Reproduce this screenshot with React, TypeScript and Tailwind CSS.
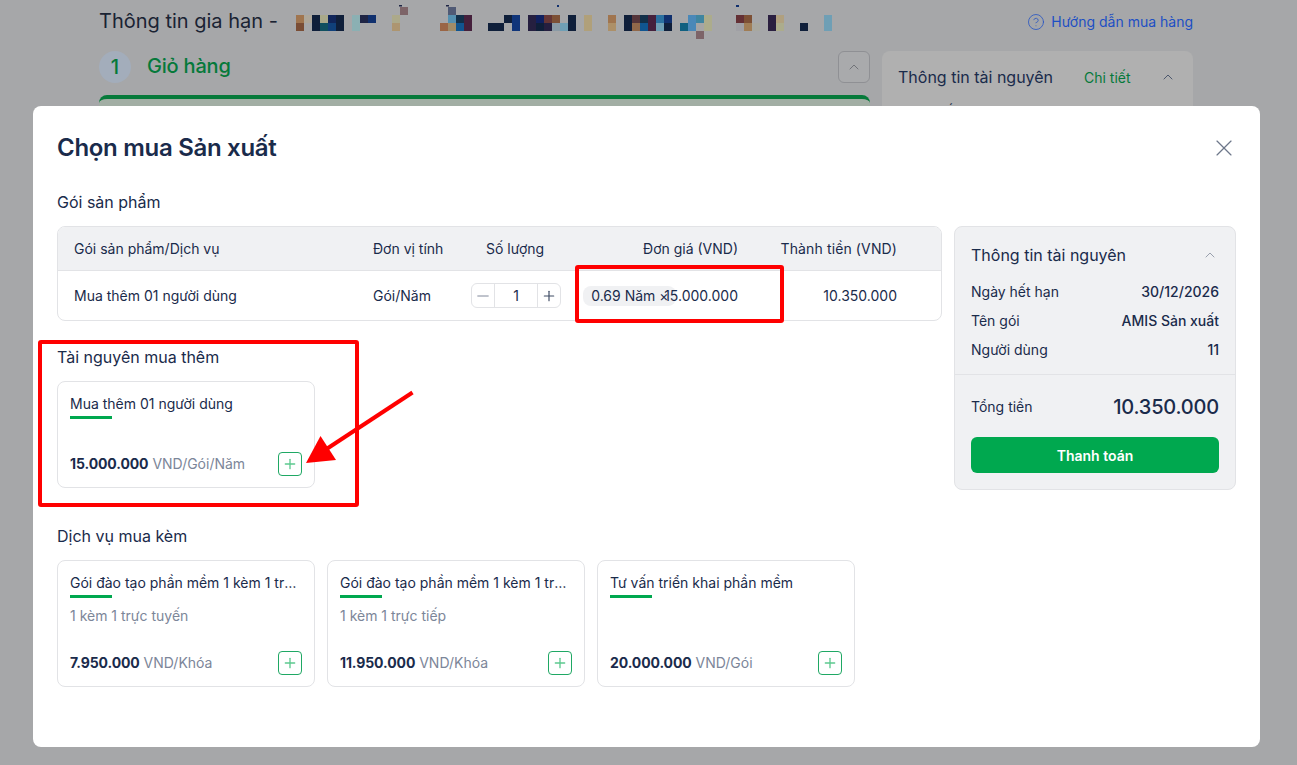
import { ChevronUp, CircleHelp, Minus, Plus, X } from "lucide-react"

// censored strip in the header: [x, y, colour], 8x8 cells
const mosaic: [number, number, string][] = [
    [296, 15, "#a0754f"], [304, 15, "#aea79a"], [312, 15, "#0f1f3a"], [320, 15, "#a9a98a"], [328, 15, "#10255a"], [336, 15, "#0f1f3a"],
    [296, 23, "#7a4d35"], [312, 23, "#0f1f3a"], [320, 23, "#10505f"], [328, 23, "#10407a"], [336, 23, "#0f1f3a"],
    [352, 15, "#8bb0b3"], [360, 15, "#1f2545"], [368, 15, "#10306e"], [352, 23, "#8bb0b3"],
    [400, 7, "#7d6468"], [392, 15, "#aca98a"], [392, 23, "#ad9570"],
    [448, 7, "#505a75"], [448, 15, "#5590b0"], [456, 15, "#12304a"], [464, 15, "#45203c"],
    [440, 23, "#9a6545"], [448, 23, "#a08c68"], [456, 23, "#105590"], [464, 23, "#45203c"],
    [504, 15, "#0f1f3a"], [512, 15, "#10357a"], [488, 23, "#0f1f3a"], [496, 23, "#0f1f3a"], [512, 23, "#10357a"],
    [528, 15, "#251f40"], [536, 15, "#10205f"], [544, 15, "#643535"], [552, 15, "#7d5035"],
    [528, 23, "#251f40"], [536, 23, "#0f1f3a"], [544, 23, "#251f40"], [552, 23, "#8a9aa5"], [560, 23, "#6f9fb5"],
    [568, 15, "#0f1f3a"], [568, 23, "#0f1f3a"], [584, 15, "#b0a07a"], [584, 23, "#b0a07a"],
    [608, 15, "#a0754f"], [608, 23, "#ad9068"],
    [624, 15, "#0f1f3a"], [632, 15, "#55353a"], [640, 15, "#12304a"], [648, 15, "#45203c"], [656, 15, "#2a70a0"], [664, 15, "#10306e"],
    [624, 23, "#0f1f3a"], [632, 23, "#90684a"], [640, 23, "#105590"], [648, 23, "#45203c"], [656, 23, "#6f9fb5"], [664, 23, "#0f1f3a"],
    [688, 15, "#4a88b8"], [696, 15, "#3f85a0"], [704, 15, "#acac8c"],
    [680, 23, "#106080"], [688, 23, "#4a88b8"], [696, 23, "#a5a5a5"], [704, 23, "#acac8c"], [696, 31, "#7d6468"],
    [736, 15, "#643035"], [744, 15, "#7d5035"], [736, 23, "#a0a0a5"], [744, 23, "#a07d55"], [752, 23, "#a8a8a0"],
    [768, 15, "#2a1f40"], [776, 15, "#b0a07f"], [768, 23, "#2a1f40"], [776, 23, "#acac8c"],
    [800, 23, "#0f1f3a"], [824, 15, "#6f9fb5"], [824, 23, "#6f9fb5"],
]

const services = [
    { name: "Gói đào tạo phần mềm 1 kèm 1 trực tuyến", desc: "1 kèm 1 trực tuyến", price: "7.950.000", unit: "VND/Khóa" },
    { name: "Gói đào tạo phần mềm 1 kèm 1 trực tiếp", desc: "1 kèm 1 trực tiếp", price: "11.950.000", unit: "VND/Khóa" },
    { name: "Tư vấn triển khai phần mềm", desc: "", price: "20.000.000", unit: "VND/Gói" },
]

const resources = [
    { label: "Ngày hết hạn", value: "30/12/2026" },
    { label: "Tên gói", value: "AMIS Sản xuất" },
    { label: "Người dùng", value: "11" },
]

function ProductCard({ name, desc, price, unit, height }: { name: string, desc?: string, price: string, unit: string, height: string }) {
    return (
        <div className={`${height} w-[258px] rounded-lg border border-[#e2e3e6] bg-white px-3 pt-3 pb-[11px] flex flex-col`}>
            <p className="truncate text-sm leading-5 text-[#1a2b4b]">{name}</p>
            <div className="mt-[2px] h-[3px] w-[42px] shrink-0 bg-[#00a84f]" />
            {desc ? <p className="mt-2 text-sm leading-5 text-[#7c8699]">{desc}</p> : null}
            <div className="mt-auto flex items-center justify-between">
                <p className="text-sm leading-5 text-[#7c8699]">
                    <span className="font-bold tracking-[-0.1px] text-[#1a2b4b]">{price}</span> {unit}
                </p>
                <button type="button" className="flex size-6 items-center justify-center rounded border border-[#1fa864] bg-white text-[#5cc98f]">
                    <Plus size={16} strokeWidth={2} />
                </button>
            </div>
        </div>
    )
}

export default function App() {
    return (
        <div className="relative h-[765px] overflow-hidden bg-[#a6a7a9] pl-[99px] pr-[104px] pt-[5px] font-[Inter,sans-serif] text-[#1a2b4b]">
            {/* page behind the dialog */}
            <div className="flex h-[34px] items-center">
                <h1 className="-mt-[3px] w-[175px] whitespace-nowrap text-xl text-[#1a2333]">Thông tin gia hạn -</h1>
                <svg className="ml-[22px]" width="536" height="34" viewBox="296 5 536 34">
                    {mosaic.map(([x, y, fill], index) => (
                        <rect key={index} x={x} y={y} width="8" height="8" fill={fill} />
                    ))}
                    <rect x="399" y="5" width="3" height="1.5" fill="#1f2545" />
                    <rect x="446" y="5" width="3" height="1.5" fill="#1f2545" />
                    <rect x="557" y="5" width="2" height="2" fill="#10306e" />
                    <rect x="736" y="5" width="3" height="2" fill="#10306e" />
                </svg>
                <a className="ml-auto -mt-[1px] flex items-center gap-[6px] text-sm text-[#1d4fc4]">
                    <CircleHelp size={18} strokeWidth={1} />
                    Hướng dẫn mua hàng
                </a>
            </div>
            <div className="mt-3 flex gap-3">
                <div className="w-[771px]">
                    <div className="flex h-8 items-center">
                        <span className="flex size-8 items-center justify-center rounded-full bg-[#a3adbb] text-xl font-medium text-[#05793a]">1</span>
                        <span className="-mt-[2px] ml-4 text-xl font-medium tracking-[-0.2px] text-[#05793a]">Giỏ hàng</span>
                        <button type="button" className="ml-auto flex size-8 items-center justify-center rounded-md border border-[#8f9094] bg-[#a9aaac] text-[#55585e]">
                            <ChevronUp size={16} strokeWidth={1} />
                        </button>
                    </div>
                    <div className="mt-3 h-[200px] rounded-t-lg border-t-4 border-[#067a3a] bg-[#a2aea4]" />
                </div>
                <div className="h-[200px] w-[311px] rounded-lg bg-[#b0b0b0] px-4 pt-[15px]">
                    <div className="flex h-[22px] items-center">
                        <span className="w-[186px] whitespace-nowrap">Thông tin tài nguyên</span>
                        <span className="mt-px text-sm text-[#05793a]">Chi tiết</span>
                        <ChevronUp className="ml-auto mr-[1px]" size={16} strokeWidth={1} />
                    </div>
                    <p className="mt-[14px] text-sm">Ngày hết hạn</p>
                </div>
            </div>

            {/* dialog */}
            <div className="absolute left-[33px] top-[106px] h-[641px] w-[1227px] rounded-lg bg-white px-6">
                <div className="flex h-[84px] items-center justify-between">
                    <h2 className="text-2xl font-semibold tracking-[-0.3px] text-[#1a2b4b]">Chọn mua Sản xuất</h2>
                    <X className="-mr-[2px] text-[#6d778a]" size={28} strokeWidth={1} />
                </div>
                <div className="flex items-start gap-3">
                    <div className="w-[885px]">
                        <h3 className="leading-6">Gói sản phẩm</h3>
                        <div className="mt-3 overflow-hidden rounded-lg border border-[#e2e3e6] text-sm">
                            <div className="flex h-11 items-center border-b border-[#e2e3e6] bg-[#f0f1f3] pl-4 pt-px">
                                <span className="w-[299px]">Gói sản phẩm/Dịch vụ</span>
                                <span className="w-[113px]">Đơn vị tính</span>
                                <span className="w-[92px]">Số lượng</span>
                                <span className="w-[160px] text-right">Đơn giá (VND)</span>
                                <span className="w-[159px] text-right tracking-[0.12px]">Thành tiền (VND)</span>
                            </div>
                            <div className="flex h-[49px] items-center pl-4">
                                <span className="w-[299px]">Mua thêm 01 người dùng</span>
                                <span className="w-[98px]">Gói/Năm</span>
                                <div className="flex h-[25px] w-[90px] items-stretch rounded-md border border-[#e2e3e6] text-[#1a2b4b]">
                                    <span className="flex w-6 items-center justify-center border-r border-[#e2e3e6] text-[#55607a]"><Minus size={18} strokeWidth={1} /></span>
                                    <span className="w-[42px] text-center leading-[23px]">1</span>
                                    <span className="flex w-6 items-center justify-center border-l border-[#e2e3e6] text-[#3d4a63]"><Plus size={16} strokeWidth={1.75} /></span>
                                </div>
                                <div className="flex w-[177px] items-center justify-end">
                                    <span className="-mr-[12px] h-5 w-[93px] whitespace-nowrap rounded-lg bg-[#f0f1f3] pl-2 leading-5">0.69 Năm ×</span>
                                    <span className="relative">15.000.000</span>
                                </div>
                                <span className="w-[159px] text-right">10.350.000</span>
                            </div>
                        </div>

                        <h3 className="mt-6 leading-6">Tài nguyên mua thêm</h3>
                        <div className="mt-3">
                            <ProductCard name="Mua thêm 01 người dùng" price="15.000.000" unit="VND/Gói/Năm" height="h-[107px]" />
                        </div>

                        <h3 className="mt-9 leading-6">Dịch vụ mua kèm</h3>
                        <div className="mt-3 flex gap-3">
                            {services.map((item) => (
                                <ProductCard key={item.name} name={item.name} desc={item.desc} price={item.price} unit={item.unit} height="h-[127px]" />
                            ))}
                        </div>
                    </div>

                    <aside className="mt-9 h-[264px] w-[282px] rounded-lg border border-[#e2e3e6] bg-[#f0f1f3] text-sm">
                        <div className="flex h-[50px] items-center justify-between px-4 pt-[5px]">
                            <span className="text-base">Thông tin tài nguyên</span>
                            <ChevronUp className="mr-[1px] text-[#6d778a]" size={16} strokeWidth={1} />
                        </div>
                        <div className="border-b border-[#e2e3e6] px-4 pb-[10px]">
                            {resources.map((row) => (
                                <div key={row.label} className="flex h-[29px] items-center justify-between">
                                    <span>{row.label}</span>
                                    <span className="font-medium">{row.value}</span>
                                </div>
                            ))}
                        </div>
                        <div className="px-4">
                            <div className="mt-4 flex h-[32px] items-center justify-between">
                                <span>Tổng tiền</span>
                                <span className="text-xl font-medium tracking-[-0.2px]">10.350.000</span>
                            </div>
                            <button type="button" className="mt-[14px] h-9 w-full rounded-md bg-[#00a84f] pt-px font-semibold text-white">Thanh toán</button>
                        </div>
                    </aside>
                </div>
            </div>

            {/* annotations drawn on top of the screenshot */}
            <div className="absolute left-[575px] top-[265px] h-[58px] w-[209px] rounded-[3px] border-[4px] border-[#ff0000]" />
            <div className="absolute left-[38px] top-[340px] h-[167px] w-[321px] rounded-[3px] border-[4px] border-[#ff0000]" />
            <svg className="absolute left-[300px] top-[385px]" width="120" height="85" viewBox="300 385 120 85">
                <line x1="412.5" y1="392.5" x2="325" y2="450" stroke="#ff0000" strokeWidth="4" />
                <polygon points="306,463 320.5,436 336,460" fill="#ff0000" />
            </svg>
        </div>
    )
}
